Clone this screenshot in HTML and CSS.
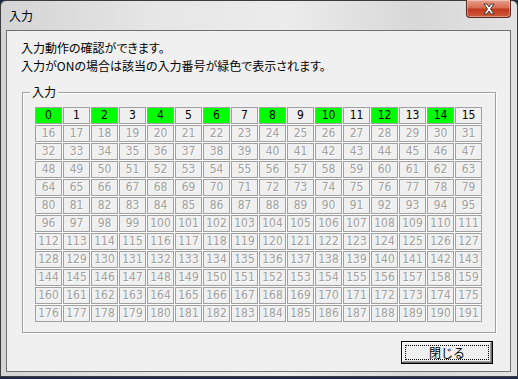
FILE: index.html
```html
<!DOCTYPE html>
<html lang="ja">
<head>
<meta charset="utf-8">
<link rel="stylesheet" href="styles.css">
</head>
<body>
<div class="window">
  <div class="titlebar">
    <span class="title">入力</span>
    <div class="close">
      <svg width="18" height="12" viewBox="0 0 18 12">
        <path d="M4 1 L7 1 L9 4 L11 1 L14 1 L10.5 6 L14 11 L11 11 L9 8 L7 11 L4 11 L7.5 6 Z" fill="#ffffff" stroke="#3a3a3a" stroke-width="1" stroke-linejoin="round"/>
      </svg>
    </div>
  </div>
  <div class="client">
    <p class="msg">入力動作の確認ができます。<br>入力がONの場合は該当の入力番号が緑色で表示されます。</p>
    <div class="group">
      <span class="legend">入力</span>
      <div class="grid">
        <div class="cell on">0</div><div class="cell off">1</div><div class="cell on">2</div><div class="cell off">3</div><div class="cell on">4</div><div class="cell off">5</div><div class="cell on">6</div><div class="cell off">7</div><div class="cell on">8</div><div class="cell off">9</div><div class="cell on">10</div><div class="cell off">11</div><div class="cell on">12</div><div class="cell off">13</div><div class="cell on">14</div><div class="cell off">15</div>
        <div class="cell">16</div><div class="cell">17</div><div class="cell">18</div><div class="cell">19</div><div class="cell">20</div><div class="cell">21</div><div class="cell">22</div><div class="cell">23</div><div class="cell">24</div><div class="cell">25</div><div class="cell">26</div><div class="cell">27</div><div class="cell">28</div><div class="cell">29</div><div class="cell">30</div><div class="cell">31</div>
        <div class="cell">32</div><div class="cell">33</div><div class="cell">34</div><div class="cell">35</div><div class="cell">36</div><div class="cell">37</div><div class="cell">38</div><div class="cell">39</div><div class="cell">40</div><div class="cell">41</div><div class="cell">42</div><div class="cell">43</div><div class="cell">44</div><div class="cell">45</div><div class="cell">46</div><div class="cell">47</div>
        <div class="cell">48</div><div class="cell">49</div><div class="cell">50</div><div class="cell">51</div><div class="cell">52</div><div class="cell">53</div><div class="cell">54</div><div class="cell">55</div><div class="cell">56</div><div class="cell">57</div><div class="cell">58</div><div class="cell">59</div><div class="cell">60</div><div class="cell">61</div><div class="cell">62</div><div class="cell">63</div>
        <div class="cell">64</div><div class="cell">65</div><div class="cell">66</div><div class="cell">67</div><div class="cell">68</div><div class="cell">69</div><div class="cell">70</div><div class="cell">71</div><div class="cell">72</div><div class="cell">73</div><div class="cell">74</div><div class="cell">75</div><div class="cell">76</div><div class="cell">77</div><div class="cell">78</div><div class="cell">79</div>
        <div class="cell">80</div><div class="cell">81</div><div class="cell">82</div><div class="cell">83</div><div class="cell">84</div><div class="cell">85</div><div class="cell">86</div><div class="cell">87</div><div class="cell">88</div><div class="cell">89</div><div class="cell">90</div><div class="cell">91</div><div class="cell">92</div><div class="cell">93</div><div class="cell">94</div><div class="cell">95</div>
        <div class="cell">96</div><div class="cell">97</div><div class="cell">98</div><div class="cell">99</div><div class="cell">100</div><div class="cell">101</div><div class="cell">102</div><div class="cell">103</div><div class="cell">104</div><div class="cell">105</div><div class="cell">106</div><div class="cell">107</div><div class="cell">108</div><div class="cell">109</div><div class="cell">110</div><div class="cell">111</div>
        <div class="cell">112</div><div class="cell">113</div><div class="cell">114</div><div class="cell">115</div><div class="cell">116</div><div class="cell">117</div><div class="cell">118</div><div class="cell">119</div><div class="cell">120</div><div class="cell">121</div><div class="cell">122</div><div class="cell">123</div><div class="cell">124</div><div class="cell">125</div><div class="cell">126</div><div class="cell">127</div>
        <div class="cell">128</div><div class="cell">129</div><div class="cell">130</div><div class="cell">131</div><div class="cell">132</div><div class="cell">133</div><div class="cell">134</div><div class="cell">135</div><div class="cell">136</div><div class="cell">137</div><div class="cell">138</div><div class="cell">139</div><div class="cell">140</div><div class="cell">141</div><div class="cell">142</div><div class="cell">143</div>
        <div class="cell">144</div><div class="cell">145</div><div class="cell">146</div><div class="cell">147</div><div class="cell">148</div><div class="cell">149</div><div class="cell">150</div><div class="cell">151</div><div class="cell">152</div><div class="cell">153</div><div class="cell">154</div><div class="cell">155</div><div class="cell">156</div><div class="cell">157</div><div class="cell">158</div><div class="cell">159</div>
        <div class="cell">160</div><div class="cell">161</div><div class="cell">162</div><div class="cell">163</div><div class="cell">164</div><div class="cell">165</div><div class="cell">166</div><div class="cell">167</div><div class="cell">168</div><div class="cell">169</div><div class="cell">170</div><div class="cell">171</div><div class="cell">172</div><div class="cell">173</div><div class="cell">174</div><div class="cell">175</div>
        <div class="cell">176</div><div class="cell">177</div><div class="cell">178</div><div class="cell">179</div><div class="cell">180</div><div class="cell">181</div><div class="cell">182</div><div class="cell">183</div><div class="cell">184</div><div class="cell">185</div><div class="cell">186</div><div class="cell">187</div><div class="cell">188</div><div class="cell">189</div><div class="cell">190</div><div class="cell">191</div>
      </div>
    </div>
    <div class="footer">
      <button class="btn"><span class="focus">閉じる</span></button>
    </div>
  </div>
</div>
</body>
</html>
```

FILE: styles.css
```css
html, body {
  margin: 0;
  padding: 0;
}
body {
  width: 518px;
  height: 379px;
  background: #1b2a48;
  overflow: hidden;
  font-family: "Noto Sans CJK JP", "Noto Sans", sans-serif;
  font-size: 12px;
  color: #000;
}
.window {
  box-sizing: border-box;
  width: 518px;
  height: 377px;
  border: 1px solid #3c3c3c;
  border-radius: 6px 6px 0 0;
  background: linear-gradient(90deg, #d4d4d4 0%, #e6e6e6 30%, #ececec 55%, #d8d8d8 80%, #e2e2e2 100%);
  display: flex;
  flex-direction: column;
}
.titlebar {
  height: 29px;
  display: flex;
  align-items: flex-start;
  justify-content: space-between;
}
.title {
  margin: 7px 0 0 8px;
  font-size: 12px;
  line-height: 16px;
  font-feature-settings: "palt";
}
.close {
  width: 45px;
  height: 18px;
  margin: -1px 6px 0 0;
  box-sizing: border-box;
  border: 1px solid #5a2a20;
  border-top: none;
  border-radius: 0 0 4px 4px;
  background: linear-gradient(180deg, #e9a08e 0%, #d66c52 45%, #c2381c 55%, #cf5a3c 100%);
  box-shadow: inset 0 0 0 1px rgba(255,255,255,0.35);
  display: flex;
  align-items: center;
  justify-content: center;
}
.close svg {
  display: block;
}
.client {
  box-sizing: border-box;
  width: 505px;
  height: 342px;
  margin-left: 5px;
  border: 1px solid #707070;
  background: #f0f0f0;
  display: flex;
  flex-direction: column;
}
.msg {
  margin: 8px 0 0 14px;
  line-height: 18px;
  font-size: 12px;
  font-feature-settings: "palt";
}
.group {
  position: relative;
  box-sizing: border-box;
  width: 474px;
  height: 241px;
  margin: 17px 0 0 15px;
  border: 1px solid #a0a0a0;
  box-shadow: 1px 1px 0 #fff, inset 1px 1px 0 #fff;
  padding: 14px 0 0 12px;
}
.legend {
  position: absolute;
  left: 7px;
  top: -9px;
  padding: 0 2px;
  background: #f0f0f0;
  line-height: 16px;
  font-size: 12px;
}
.grid {
  display: grid;
  grid-template-columns: repeat(16, 27px);
  grid-auto-rows: 17px;
  gap: 1px;
  width: 447px;
  background: #ffffff;
}
.cell {
  box-sizing: border-box;
  border: 1px solid #a0a0a0;
  background: #f0f0f0;
  color: #a0a0a0;
  text-shadow: 1px 1px 0 #ffffff;
  text-align: center;
  font-family: "Liberation Sans Narrow", "DejaVu Sans Condensed", "Arial Narrow", "Liberation Sans", sans-serif;
  font-size: 12px;
  line-height: 15px;
}
.cell.on {
  background: #00ff00;
  color: #000;
  text-shadow: none;
}
.cell.off {
  color: #000;
  text-shadow: none;
}
.footer {
  display: flex;
  justify-content: flex-end;
  margin: 8px 17px 0 0;
}
.btn {
  box-sizing: border-box;
  width: 92px;
  height: 23px;
  padding: 3px;
  border: 1px solid #000;
  background: #f0f0f0;
  box-shadow: inset -1px -1px 0 #696969, inset 1px 1px 0 #fff, inset -2px -2px 0 #a0a0a0;
  font-family: "Noto Sans CJK JP", sans-serif;
  font-size: 12px;
  display: flex;
}
.focus {
  flex: 1;
  border: 1px dotted #000;
  line-height: 13px;
  text-align: center;
}
```
